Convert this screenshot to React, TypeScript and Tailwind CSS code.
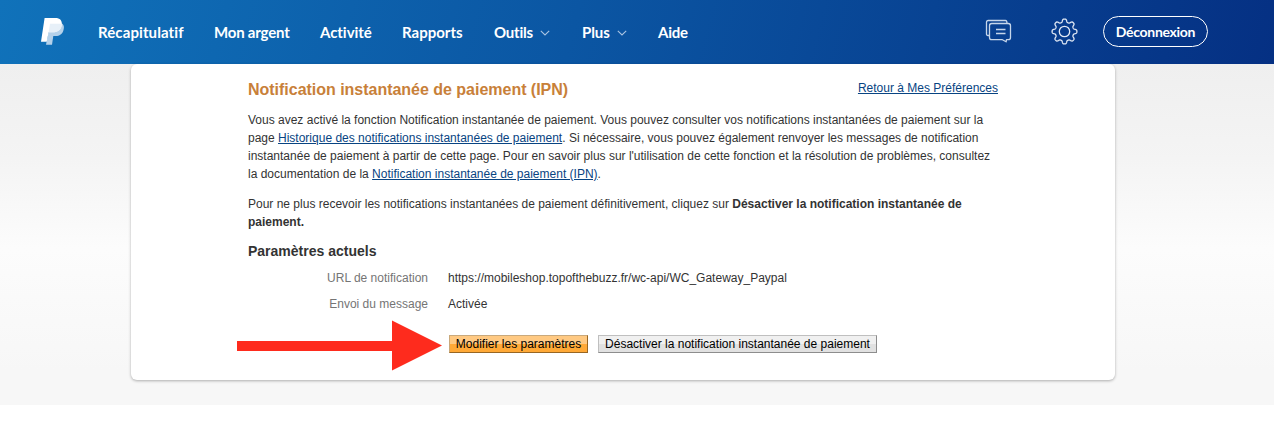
import React from 'react';

type NavItem = { label: string; left: string; width: string; tracking: string; menu?: boolean };

const navItems: NavItem[] = [
  { label: 'Récapitulatif', left: 'ml-[34px]', width: 'w-[86px]', tracking: 'tracking-[0.1px]' },
  { label: 'Mon argent', left: 'ml-[30px]', width: 'w-[76px]', tracking: 'tracking-[-0.2px]' },
  { label: 'Activité', left: 'ml-[30px]', width: 'w-[52px]', tracking: 'tracking-[-0.05px]' },
  { label: 'Rapports', left: 'ml-[30px]', width: 'w-[61px]', tracking: 'tracking-[0px]' },
  { label: 'Outils', left: 'ml-[31px]', width: 'w-[56px]', tracking: 'tracking-[-0.2px]', menu: true },
  { label: 'Plus', left: 'ml-[32px]', width: 'w-[45px]', tracking: 'tracking-[-0.1px]', menu: true },
  { label: 'Aide', left: 'ml-[31px]', width: 'w-[30px]', tracking: 'tracking-[-0.2px]' },
];

// Outline of an eight-toothed wheel with softly rounded teeth.
const gearPoints = Array.from({ length: 160 }, (_, i) => {
  const angle = (i / 160) * Math.PI * 2;
  const radius = 10.9 + 1.6 * Math.tanh(1.8 * Math.cos(8 * angle));
  return `${(13.5 + radius * Math.sin(angle)).toFixed(2)},${(13.5 - radius * Math.cos(angle)).toFixed(2)}`;
}).join(' ');

function Logo() {
  return (
    <svg className="ml-10 mt-[17px] h-7 w-6 shrink-0" viewBox="0 0 24 28">
      <path d="M10 6.500h12c2 1.300 2.300 3.700 1.500 6.500-1 4-4 6-7.800 6h-2.400l-1.300 8.800H6z" fill="#b4d1ea" />
      <path d="M4.600 1h10.700c4.600 0 7.300 2.600 6.400 7.200-.9 4.800-4.100 7-8.900 7H8.600L6.700 24.800H1z" fill="#fff" />
      <path d="M10 6.700h11.600c.5 5.500-3.200 8.600-8.800 8.600H8.600z" fill="#e7f0f8" />
    </svg>
  );
}

function Chevron() {
  return (
    <svg className="mt-[30px] ml-auto h-[6px] w-[10px]" viewBox="0 0 10 6" fill="none" stroke="#a9c4e2" strokeWidth="1.1">
      <path d="M.8.800 5 4.900 9.200.8" />
    </svg>
  );
}

function Messages() {
  return (
    <svg className="mt-[19px] h-[25px] w-[27px] shrink-0" viewBox="0 0 27 25" fill="none" stroke="#c5d5ea" strokeWidth="1.3" strokeLinejoin="round">
      <path d="M4.500 16.500H3q-1.500 0-1.500-1.500V3.200q0-1.700 1.700-1.700h17.300q1.500 0 1.500 2.900" />
      <path d="M6.700 4.500h16.600q2.200 0 2.200 2.200v11.800q0 2.200-2.200 2.200h-1.800l-.4 2.100-3.700-2.100H6.700q-2.200 0-2.200-2.200V6.700q0-2.200 2.200-2.200z" />
      <path d="M11 10.500h9.500M11 14.500h9.500" />
    </svg>
  );
}

function Gear() {
  return (
    <svg className="mt-[18px] ml-[39px] h-[27px] w-[27px] shrink-0" viewBox="0 0 27 27" fill="none" stroke="#e0e8f4" strokeWidth="1.3" strokeLinejoin="round">
      <circle cx="13.500" cy="13.500" r="5.200" />
      <polygon points={gearPoints} />
    </svg>
  );
}

function Link({ children }: { children: React.ReactNode }) {
  return <a href="#" className="text-[#084482] underline">{children}</a>;
}

export default function App() {
  return (
    <div className="h-[442px] w-[1274px] overflow-hidden bg-white font-['Liberation_Sans',Arial,sans-serif] text-[12px] leading-[18px] text-[#333]">
      <header className="flex h-16 items-start bg-[linear-gradient(105deg,#1072ba_0%,#0b56a3_45%,#053083_100%)] font-['Lato','Noto_Sans',sans-serif] text-white">
        <Logo />
        <nav className="flex text-[15px] leading-[64px] font-bold">
          {navItems.map((item) => (
            <a key={item.label} href="#" className={`flex whitespace-nowrap ${item.left} ${item.width} ${item.tracking}`}>
              {item.label}
              {item.menu && <Chevron />}
            </a>
          ))}
        </nav>
        <div className="ml-auto flex w-[289px] items-start">
          <Messages />
          <Gear />
          <button className="mt-4 ml-[25px] h-[31px] w-[105px] rounded-full border border-white text-[14px] leading-[29px] font-bold tracking-[-0.3px] whitespace-nowrap">
            Déconnexion
          </button>
        </div>
      </header>
      <div className="h-[341px] bg-[linear-gradient(#efefef_0%,#f4f4f4_28%,#fcfcfc_54%,#f7f7f7_90%)]">
        <main className="ml-[131px] h-[316px] w-[984px] rounded-[6px] bg-white pl-[117px] shadow-[0_1px_3px_rgba(0,0,0,0.3)]">
          <div className="flex w-[750px] justify-between pt-[15px]">
            <h1 className="text-[16px] leading-[21px] font-bold tracking-[-0.02px] text-[#c88039]">Notification instantanée de paiement (IPN)</h1>
            <Link>Retour à Mes Préférences</Link>
          </div>
          <p className="mt-[11px] whitespace-nowrap">
            Vous avez activé la fonction Notification instantanée de paiement. Vous pouvez consulter vos notifications instantanées de paiement sur la<br />
            page <Link>Historique des notifications instantanées de paiement</Link>. Si nécessaire, vous pouvez également renvoyer les messages de notification<br />
            instantanée de paiement à partir de cette page. Pour en savoir plus sur l'utilisation de cette fonction et la résolution de problèmes, consultez<br />
            la documentation de la <Link>Notification instantanée de paiement (IPN)</Link>.
          </p>
          <p className="mt-3 whitespace-nowrap">
            Pour ne plus recevoir les notifications instantanées de paiement définitivement, cliquez sur <b>Désactiver la notification instantanée de<br />paiement.</b>
          </p>
          <h2 className="mt-[11px] text-[14px] leading-[18px] font-bold">Paramètres actuels</h2>
          <dl className="mt-[9px] grid grid-cols-[180px_1fr] gap-x-5 gap-y-2">
            <dt className="text-right text-[#757575]">URL de notification</dt>
            <dd>https://mobileshop.topofthebuzz.fr/wc-api/WC_Gateway_Paypal</dd>
            <dt className="text-right text-[#757575]">Envoi du message</dt>
            <dd>Activée</dd>
          </dl>
          <div className="mt-[7px] -ml-[11px] flex items-start text-black">
            <svg className="h-[51px] w-[205px]" viewBox="0 0 205 51">
              <path d="M0 21h155V.500l50 25-50 25V31H0z" fill="#fe2b1d" />
            </svg>
            <button className="mt-[15px] ml-[7px] h-[18px] w-[139px] border border-t-[#c9a97c] border-r-[#986622] border-b-[#986622] border-l-[#c9a97c] bg-[linear-gradient(#ffc982_0_50%,#ffa937_50%_100%)] leading-[16px] whitespace-nowrap">Modifier les paramètres</button>
            <button className="mt-[15px] ml-[10px] h-[18px] w-[279px] border border-t-[#bfbfbf] border-r-[#8d8d8d] border-b-[#8d8d8d] border-l-[#bfbfbf] bg-[linear-gradient(#f0f0f0_0_50%,#e1e1e1_50%_100%)] leading-[16px] whitespace-nowrap">Désactiver la notification instantanée de paiement</button>
          </div>
        </main>
      </div>
    </div>
  );
}
